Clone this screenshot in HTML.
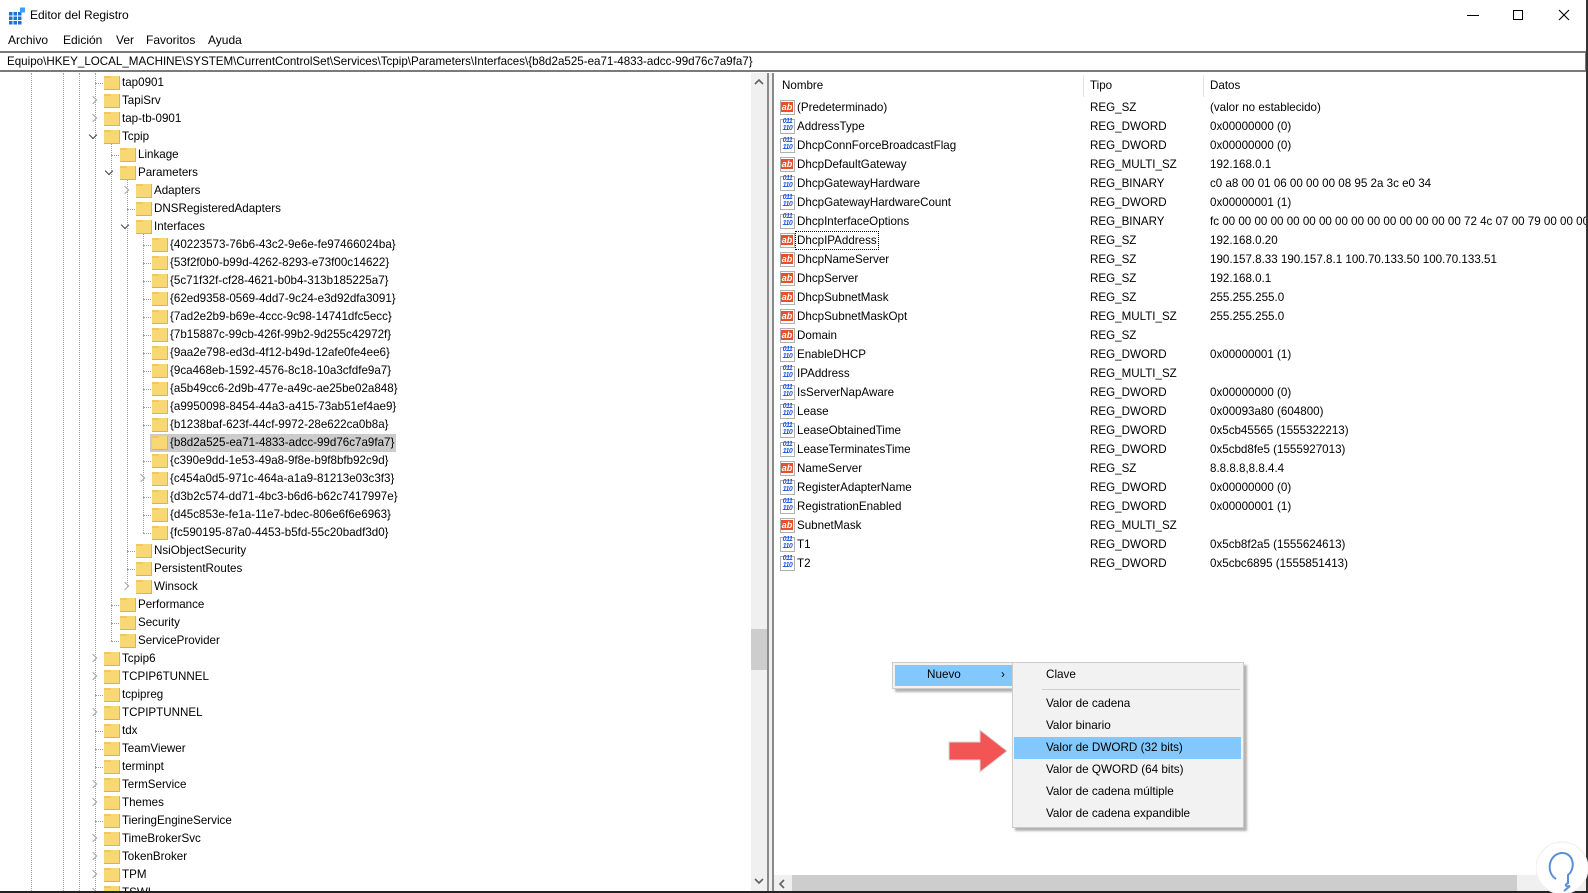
<!DOCTYPE html>
<html><head><meta charset="utf-8"><style>
*{margin:0;padding:0;box-sizing:border-box}
body{width:1588px;height:893px;overflow:hidden;background:#fff;font-family:"Liberation Sans",sans-serif;font-size:11.7px;color:#000;position:relative}
.abs{position:absolute}
.menu span{position:absolute;top:33px;font-size:12px}
#addr{position:absolute;left:0;top:51px;width:1587px;height:21px;border:2px solid #7a7a7a;border-left:none;background:#fff;font-size:11.6px;line-height:17px;padding-left:7px;white-space:nowrap}
#left{position:absolute;left:0;top:73px;width:751px;height:818px;overflow:hidden;background:#fff}
.r{position:absolute;height:18px;line-height:18px;white-space:nowrap;font-size:11.6px}
.r i.f{position:absolute;left:0;top:2px;width:16px;height:14px;background:#f8d775;border-right:1px solid #e0b24a;border-bottom:1px solid #e0b24a}
.r i.f:before{content:"";position:absolute;left:0;top:0;width:7px;height:2px;background:#f2c75c}
.r b{font-weight:normal;position:absolute;left:18px;top:0}
.r .a{position:absolute;left:-14px;top:5px;width:6px;height:6px;border-right:1.5px solid #a6a6a6;border-bottom:1.5px solid #a6a6a6;transform:rotate(-45deg)}
.r .e{position:absolute;left:-14px;top:4px;width:6px;height:6px;border-right:1.5px solid #404040;border-bottom:1.5px solid #404040;transform:rotate(45deg)}
.r .h{position:absolute;top:9px;height:1px;border-top:1px dotted #a0a0a0}
.vl{position:absolute;width:1px;border-left:1px dotted #a0a0a0}
#right{position:absolute;left:774px;top:73px;width:812px;height:818px;overflow:hidden;background:#fff}
.row{position:absolute;left:0;height:19px;line-height:19px;white-space:nowrap;font-size:11.6px;width:812px}
.row span{position:absolute}
.ab{position:absolute;left:6px;top:2px;width:15px;height:15px;border:1px solid #b0b0b0;background:#fff}
.ab:after{content:"ab";position:absolute;left:0;top:1px;width:12px;height:10px;background:#e8502a;color:#fff;font-size:9px;line-height:10px;font-weight:bold;text-align:center}
.dw{position:absolute;left:6px;top:2px;width:15px;height:15px;border:1px solid #b0b0b0;background:#fff}
.dw:after{content:"011";position:absolute;left:0;top:-1px;width:13px;height:13px;color:#1a5ad8;font-size:7px;line-height:6px;font-weight:bold;letter-spacing:-0.5px;text-align:center}
.dw:before{content:"110";position:absolute;left:0;top:6px;width:13px;color:#1a5ad8;font-size:7px;line-height:6px;font-weight:bold;letter-spacing:-0.5px;text-align:center}
.n{left:23px}.t{left:316px}.d{left:436px}
.ctx{position:absolute;font-size:11.7px}
</style></head><body>
<svg class="abs" style="left:8px;top:7px" width="18" height="18" viewBox="0 0 18 18">
<g fill="#1a73d6"><rect x="1" y="5" width="3.5" height="3.5"/><rect x="5.5" y="5" width="3.5" height="3.5"/><rect x="10" y="5" width="3.5" height="3.5"/><rect x="1" y="9.5" width="3.5" height="3.5"/><rect x="5.5" y="9.5" width="3.5" height="3.5"/><rect x="10" y="9.5" width="3.5" height="3.5"/><rect x="1" y="14" width="3.5" height="3.5"/><rect x="5.5" y="14" width="3.5" height="3.5"/><rect x="10" y="14" width="3.5" height="3.5"/></g>
<rect x="12" y="0.5" width="5" height="5" fill="#3aa0f0"/></svg>
<div class="abs" style="left:30px;top:8px;font-size:12px">Editor del Registro</div>
<div class="abs" style="left:1467px;top:15px;width:12px;height:1px;background:#000"></div>
<div class="abs" style="left:1513px;top:10px;width:10px;height:10px;border:1px solid #000"></div>
<svg class="abs" style="left:1558px;top:9px" width="12" height="12"><path d="M1 1L11 11M11 1L1 11" stroke="#000" stroke-width="1.1"/></svg>
<div class="menu"><span style="left:8px">Archivo</span><span style="left:63px">Edición</span><span style="left:116px">Ver</span><span style="left:146px">Favoritos</span><span style="left:208px">Ayuda</span></div>
<div id="addr">Equipo\HKEY_LOCAL_MACHINE\SYSTEM\CurrentControlSet\Services\Tcpip\Parameters\Interfaces\{b8d2a525-ea71-4833-adcc-99d76c7a9fa7}</div>

<div id="left">
<div class="vl" style="left:31px;top:0;height:818px"></div>
<div class="vl" style="left:63px;top:0;height:818px"></div>
<div class="vl" style="left:79px;top:0;height:818px"></div>
<div class="vl" style="left:95px;top:0;height:818px"></div>
<div class="vl" style="left:111px;top:64px;height:504px"></div>
<div class="vl" style="left:127px;top:100px;height:414px"></div>
<div class="vl" style="left:143px;top:154px;height:306px"></div>
<div class="abs" style="left:150px;top:361px;width:246px;height:18px;background:#cccccc"></div>
<div class="r" style="left:104px;top:1px"><i class="h" style="left:-9px;width:8px"></i><i class="f"></i><b>tap0901</b></div>
<div class="r" style="left:104px;top:19px"><i class="a"></i><i class="f"></i><b>TapiSrv</b></div>
<div class="r" style="left:104px;top:37px"><i class="a"></i><i class="f"></i><b>tap-tb-0901</b></div>
<div class="r" style="left:104px;top:55px"><i class="e"></i><i class="f"></i><b>Tcpip</b></div>
<div class="r" style="left:120px;top:73px"><i class="h" style="left:-9px;width:8px"></i><i class="f"></i><b>Linkage</b></div>
<div class="r" style="left:120px;top:91px"><i class="e"></i><i class="f"></i><b>Parameters</b></div>
<div class="r" style="left:136px;top:109px"><i class="a"></i><i class="f"></i><b>Adapters</b></div>
<div class="r" style="left:136px;top:127px"><i class="h" style="left:-9px;width:8px"></i><i class="f"></i><b>DNSRegisteredAdapters</b></div>
<div class="r" style="left:136px;top:145px"><i class="e"></i><i class="f"></i><b>Interfaces</b></div>
<div class="r" style="left:152px;top:163px"><i class="h" style="left:-9px;width:8px"></i><i class="f"></i><b>{40223573-76b6-43c2-9e6e-fe97466024ba}</b></div>
<div class="r" style="left:152px;top:181px"><i class="h" style="left:-9px;width:8px"></i><i class="f"></i><b>{53f2f0b0-b99d-4262-8293-e73f00c14622}</b></div>
<div class="r" style="left:152px;top:199px"><i class="h" style="left:-9px;width:8px"></i><i class="f"></i><b>{5c71f32f-cf28-4621-b0b4-313b185225a7}</b></div>
<div class="r" style="left:152px;top:217px"><i class="h" style="left:-9px;width:8px"></i><i class="f"></i><b>{62ed9358-0569-4dd7-9c24-e3d92dfa3091}</b></div>
<div class="r" style="left:152px;top:235px"><i class="h" style="left:-9px;width:8px"></i><i class="f"></i><b>{7ad2e2b9-b69e-4ccc-9c98-14741dfc5ecc}</b></div>
<div class="r" style="left:152px;top:253px"><i class="h" style="left:-9px;width:8px"></i><i class="f"></i><b>{7b15887c-99cb-426f-99b2-9d255c42972f}</b></div>
<div class="r" style="left:152px;top:271px"><i class="h" style="left:-9px;width:8px"></i><i class="f"></i><b>{9aa2e798-ed3d-4f12-b49d-12afe0fe4ee6}</b></div>
<div class="r" style="left:152px;top:289px"><i class="h" style="left:-9px;width:8px"></i><i class="f"></i><b>{9ca468eb-1592-4576-8c18-10a3cfdfe9a7}</b></div>
<div class="r" style="left:152px;top:307px"><i class="h" style="left:-9px;width:8px"></i><i class="f"></i><b>{a5b49cc6-2d9b-477e-a49c-ae25be02a848}</b></div>
<div class="r" style="left:152px;top:325px"><i class="h" style="left:-9px;width:8px"></i><i class="f"></i><b>{a9950098-8454-44a3-a415-73ab51ef4ae9}</b></div>
<div class="r" style="left:152px;top:343px"><i class="h" style="left:-9px;width:8px"></i><i class="f"></i><b>{b1238baf-623f-44cf-9972-28e622ca0b8a}</b></div>
<div class="r" style="left:152px;top:361px"><i class="f"></i><b>{b8d2a525-ea71-4833-adcc-99d76c7a9fa7}</b></div>
<div class="r" style="left:152px;top:379px"><i class="h" style="left:-9px;width:8px"></i><i class="f"></i><b>{c390e9dd-1e53-49a8-9f8e-b9f8bfb92c9d}</b></div>
<div class="r" style="left:152px;top:397px"><i class="a"></i><i class="f"></i><b>{c454a0d5-971c-464a-a1a9-81213e03c3f3}</b></div>
<div class="r" style="left:152px;top:415px"><i class="h" style="left:-9px;width:8px"></i><i class="f"></i><b>{d3b2c574-dd71-4bc3-b6d6-b62c7417997e}</b></div>
<div class="r" style="left:152px;top:433px"><i class="h" style="left:-9px;width:8px"></i><i class="f"></i><b>{d45c853e-fe1a-11e7-bdec-806e6f6e6963}</b></div>
<div class="r" style="left:152px;top:451px"><i class="h" style="left:-9px;width:8px"></i><i class="f"></i><b>{fc590195-87a0-4453-b5fd-55c20badf3d0}</b></div>
<div class="r" style="left:136px;top:469px"><i class="h" style="left:-9px;width:8px"></i><i class="f"></i><b>NsiObjectSecurity</b></div>
<div class="r" style="left:136px;top:487px"><i class="h" style="left:-9px;width:8px"></i><i class="f"></i><b>PersistentRoutes</b></div>
<div class="r" style="left:136px;top:505px"><i class="a"></i><i class="f"></i><b>Winsock</b></div>
<div class="r" style="left:120px;top:523px"><i class="h" style="left:-9px;width:8px"></i><i class="f"></i><b>Performance</b></div>
<div class="r" style="left:120px;top:541px"><i class="h" style="left:-9px;width:8px"></i><i class="f"></i><b>Security</b></div>
<div class="r" style="left:120px;top:559px"><i class="h" style="left:-9px;width:8px"></i><i class="f"></i><b>ServiceProvider</b></div>
<div class="r" style="left:104px;top:577px"><i class="a"></i><i class="f"></i><b>Tcpip6</b></div>
<div class="r" style="left:104px;top:595px"><i class="a"></i><i class="f"></i><b>TCPIP6TUNNEL</b></div>
<div class="r" style="left:104px;top:613px"><i class="h" style="left:-9px;width:8px"></i><i class="f"></i><b>tcpipreg</b></div>
<div class="r" style="left:104px;top:631px"><i class="a"></i><i class="f"></i><b>TCPIPTUNNEL</b></div>
<div class="r" style="left:104px;top:649px"><i class="h" style="left:-9px;width:8px"></i><i class="f"></i><b>tdx</b></div>
<div class="r" style="left:104px;top:667px"><i class="h" style="left:-9px;width:8px"></i><i class="f"></i><b>TeamViewer</b></div>
<div class="r" style="left:104px;top:685px"><i class="h" style="left:-9px;width:8px"></i><i class="f"></i><b>terminpt</b></div>
<div class="r" style="left:104px;top:703px"><i class="a"></i><i class="f"></i><b>TermService</b></div>
<div class="r" style="left:104px;top:721px"><i class="a"></i><i class="f"></i><b>Themes</b></div>
<div class="r" style="left:104px;top:739px"><i class="h" style="left:-9px;width:8px"></i><i class="f"></i><b>TieringEngineService</b></div>
<div class="r" style="left:104px;top:757px"><i class="a"></i><i class="f"></i><b>TimeBrokerSvc</b></div>
<div class="r" style="left:104px;top:775px"><i class="a"></i><i class="f"></i><b>TokenBroker</b></div>
<div class="r" style="left:104px;top:793px"><i class="a"></i><i class="f"></i><b>TPM</b></div>
<div class="r" style="left:104px;top:811px"><i class="a"></i><i class="f"></i><b>TSWI</b></div>
</div>
<div class="abs" style="left:751px;top:73px;width:16px;height:818px;background:#f0f0f0"></div>
<svg class="abs" style="left:754px;top:78px" width="10" height="8"><path d="M1 6L5 2L9 6" stroke="#606060" stroke-width="1.6" fill="none"/></svg>
<div class="abs" style="left:751px;top:629px;width:16px;height:41px;background:#cdcdcd"></div>
<svg class="abs" style="left:754px;top:877px" width="10" height="8"><path d="M1 2L5 6L9 2" stroke="#606060" stroke-width="1.6" fill="none"/></svg>
<div class="abs" style="left:767px;top:73px;width:2px;height:818px;background:#8a8a8a"></div>
<div class="abs" style="left:769px;top:73px;width:3px;height:818px;background:#f0f0f0"></div>
<div class="abs" style="left:772px;top:73px;width:2px;height:818px;background:#8a8a8a"></div>

<div id="right">
<div class="row" style="top:3px;height:20px;line-height:20px"><span style="left:8px">Nombre</span><span style="left:316px">Tipo</span><span style="left:436px">Datos</span></div>
<div class="abs" style="left:309px;top:2px;width:1px;height:22px;background:#e5e5e5"></div>
<div class="abs" style="left:429px;top:2px;width:1px;height:22px;background:#e5e5e5"></div>
<div class="row" style="top:25px"><i class="ab"></i><span class="n">(Predeterminado)</span><span class="t">REG_SZ</span><span class="d">(valor no establecido)</span></div>
<div class="row" style="top:44px"><i class="dw"></i><span class="n">AddressType</span><span class="t">REG_DWORD</span><span class="d">0x00000000 (0)</span></div>
<div class="row" style="top:63px"><i class="dw"></i><span class="n">DhcpConnForceBroadcastFlag</span><span class="t">REG_DWORD</span><span class="d">0x00000000 (0)</span></div>
<div class="row" style="top:82px"><i class="ab"></i><span class="n">DhcpDefaultGateway</span><span class="t">REG_MULTI_SZ</span><span class="d">192.168.0.1</span></div>
<div class="row" style="top:101px"><i class="dw"></i><span class="n">DhcpGatewayHardware</span><span class="t">REG_BINARY</span><span class="d">c0 a8 00 01 06 00 00 00 08 95 2a 3c e0 34</span></div>
<div class="row" style="top:120px"><i class="dw"></i><span class="n">DhcpGatewayHardwareCount</span><span class="t">REG_DWORD</span><span class="d">0x00000001 (1)</span></div>
<div class="row" style="top:139px"><i class="dw"></i><span class="n">DhcpInterfaceOptions</span><span class="t">REG_BINARY</span><span class="d">fc 00 00 00 00 00 00 00 00 00 00 00 00 00 00 00 72 4c 07 00 79 00 00 00 00 (</span></div>
<div class="row" style="top:158px"><i class="ab"></i><span class="n" style="outline:1px dotted #000;line-height:17px;top:1px;padding:0 1px;left:22px">DhcpIPAddress</span><span class="t">REG_SZ</span><span class="d">192.168.0.20</span></div>
<div class="row" style="top:177px"><i class="ab"></i><span class="n">DhcpNameServer</span><span class="t">REG_SZ</span><span class="d">190.157.8.33 190.157.8.1 100.70.133.50 100.70.133.51</span></div>
<div class="row" style="top:196px"><i class="ab"></i><span class="n">DhcpServer</span><span class="t">REG_SZ</span><span class="d">192.168.0.1</span></div>
<div class="row" style="top:215px"><i class="ab"></i><span class="n">DhcpSubnetMask</span><span class="t">REG_SZ</span><span class="d">255.255.255.0</span></div>
<div class="row" style="top:234px"><i class="ab"></i><span class="n">DhcpSubnetMaskOpt</span><span class="t">REG_MULTI_SZ</span><span class="d">255.255.255.0</span></div>
<div class="row" style="top:253px"><i class="ab"></i><span class="n">Domain</span><span class="t">REG_SZ</span></div>
<div class="row" style="top:272px"><i class="dw"></i><span class="n">EnableDHCP</span><span class="t">REG_DWORD</span><span class="d">0x00000001 (1)</span></div>
<div class="row" style="top:291px"><i class="dw"></i><span class="n">IPAddress</span><span class="t">REG_MULTI_SZ</span></div>
<div class="row" style="top:310px"><i class="dw"></i><span class="n">IsServerNapAware</span><span class="t">REG_DWORD</span><span class="d">0x00000000 (0)</span></div>
<div class="row" style="top:329px"><i class="dw"></i><span class="n">Lease</span><span class="t">REG_DWORD</span><span class="d">0x00093a80 (604800)</span></div>
<div class="row" style="top:348px"><i class="dw"></i><span class="n">LeaseObtainedTime</span><span class="t">REG_DWORD</span><span class="d">0x5cb45565 (1555322213)</span></div>
<div class="row" style="top:367px"><i class="dw"></i><span class="n">LeaseTerminatesTime</span><span class="t">REG_DWORD</span><span class="d">0x5cbd8fe5 (1555927013)</span></div>
<div class="row" style="top:386px"><i class="ab"></i><span class="n">NameServer</span><span class="t">REG_SZ</span><span class="d">8.8.8.8,8.8.4.4</span></div>
<div class="row" style="top:405px"><i class="dw"></i><span class="n">RegisterAdapterName</span><span class="t">REG_DWORD</span><span class="d">0x00000000 (0)</span></div>
<div class="row" style="top:424px"><i class="dw"></i><span class="n">RegistrationEnabled</span><span class="t">REG_DWORD</span><span class="d">0x00000001 (1)</span></div>
<div class="row" style="top:443px"><i class="ab"></i><span class="n">SubnetMask</span><span class="t">REG_MULTI_SZ</span></div>
<div class="row" style="top:462px"><i class="dw"></i><span class="n">T1</span><span class="t">REG_DWORD</span><span class="d">0x5cb8f2a5 (1555624613)</span></div>
<div class="row" style="top:481px"><i class="dw"></i><span class="n">T2</span><span class="t">REG_DWORD</span><span class="d">0x5cbc6895 (1555851413)</span></div>
<div class="abs" style="left:0;top:802px;width:812px;height:16px;background:#f0f0f0"></div>
<svg class="abs" style="left:4px;top:806px" width="8" height="10"><path d="M6 1L2 5L6 9" stroke="#606060" stroke-width="1.6" fill="none"/></svg>
<div class="abs" style="left:18px;top:802px;width:725px;height:16px;background:#cdcdcd"></div>
</div>
<div class="abs" style="left:1586px;top:0;width:2px;height:893px;background:#333"></div>
<div class="abs" style="left:0;top:891px;width:1588px;height:2px;background:#222"></div>

<div class="abs" style="left:892px;top:662px;width:122px;height:27px;background:#f2f2f2;border:1px solid #ccc;box-shadow:3px 3px 2px rgba(0,0,0,.3)"></div>
<div class="abs" style="left:895px;top:665px;width:118px;height:21px;background:#82c8fd"></div>
<div class="ctx" style="left:927px;top:668px">Nuevo</div>
<div class="ctx" style="left:1001px;top:668px">›</div>
<div class="abs" style="left:1012px;top:662px;width:232px;height:166px;background:#f2f2f2;border:1px solid #ccc;box-shadow:3px 3px 2px rgba(0,0,0,.3)"></div>
<div class="abs" style="left:1042px;top:689px;width:198px;height:1px;background:#d0d0d0"></div>
<div class="abs" style="left:1014px;top:737px;width:227px;height:22px;background:#82c8fd"></div>
<div class="ctx" style="left:1046px;top:668px">Clave</div>
<div class="ctx" style="left:1046px;top:697px">Valor de cadena</div>
<div class="ctx" style="left:1046px;top:719px">Valor binario</div>
<div class="ctx" style="left:1046px;top:741px">Valor de DWORD (32 bits)</div>
<div class="ctx" style="left:1046px;top:763px">Valor de QWORD (64 bits)</div>
<div class="ctx" style="left:1046px;top:785px">Valor de cadena múltiple</div>
<div class="ctx" style="left:1046px;top:807px">Valor de cadena expandible</div>
<svg class="abs" style="left:947px;top:728px" width="64" height="46"><path d="M2 14H33V2L60 23L33 44V32H2Z" fill="#f35454" stroke="#d9d9d9" stroke-width="1"/></svg>
<svg class="abs" style="left:1536px;top:841px" width="52" height="52"><circle cx="26" cy="27" r="26" fill="#fff" stroke="#eee"/><path d="M20 38C10 32 12 14 25 12C38 11 40 28 32 34L32 42C28 44 30 46 34 45L28 50" fill="none" stroke="#5a8fd8" stroke-width="2"/></svg>
</body></html>
